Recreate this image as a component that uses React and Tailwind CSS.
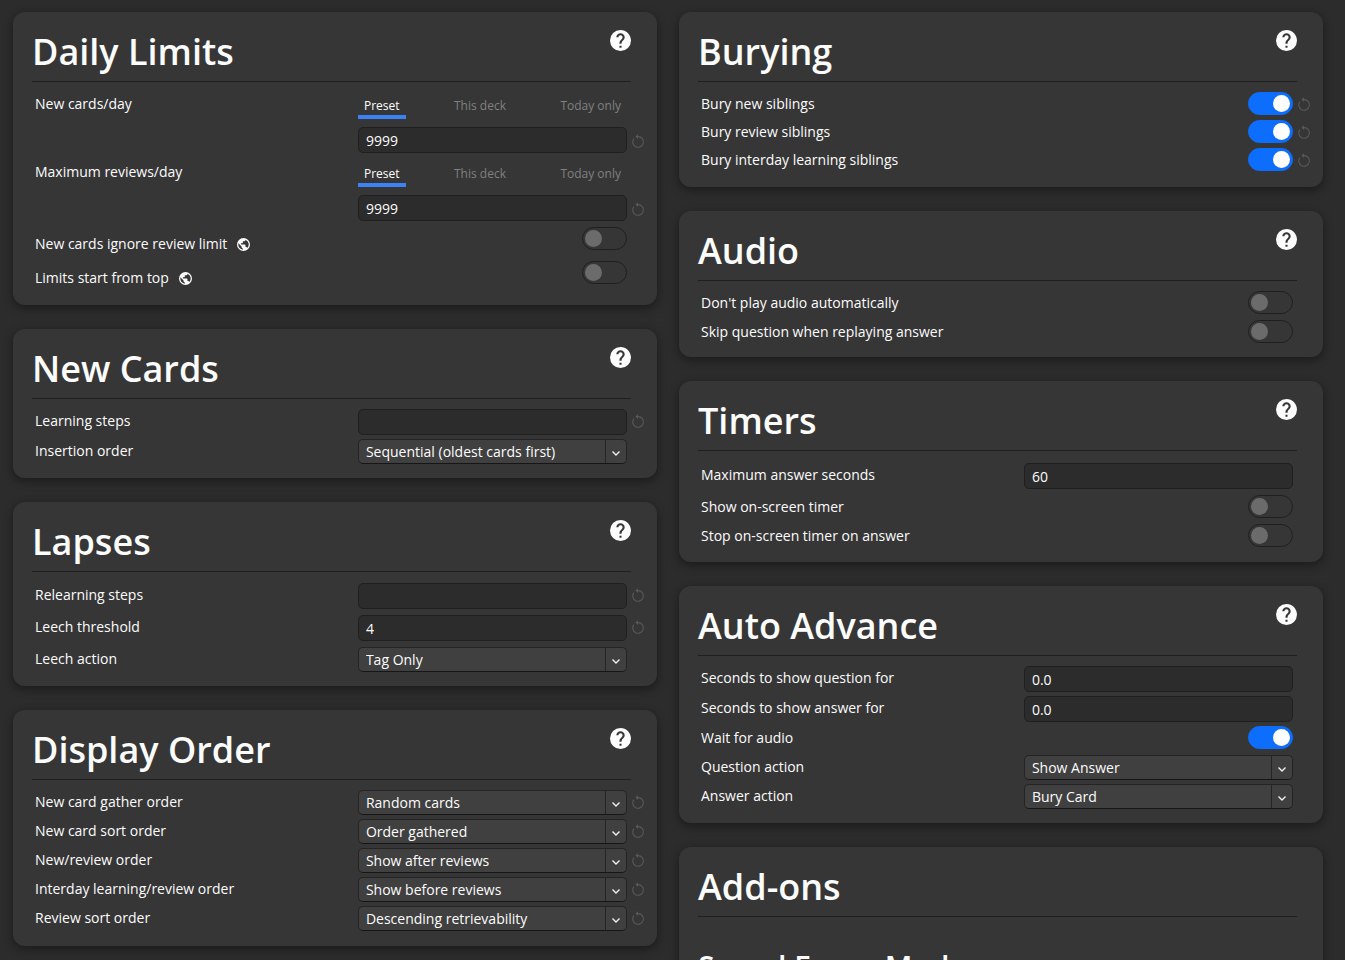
import { useState } from "react"

const tabs = ["Preset", "This deck", "Today only"]

function HelpIcon() {
  return (
    <svg viewBox="2 2 20 20" className="size-[21px]" fill="currentColor" aria-hidden="true">
      <path d="M15.07 11.25l-.9.92C13.45 12.89 13 13.5 13 15h-2v-.5c0-1.11.45-2.11 1.17-2.83l1.24-1.26c.37-.36.59-.86.59-1.41a2 2 0 0 0-2-2 2 2 0 0 0-2 2H8a4 4 0 0 1 4-4 4 4 0 0 1 4 4 3.2 3.2 0 0 1-.93 2.25M13 19h-2v-2h2M12 2A10 10 0 0 0 2 12a10 10 0 0 0 10 10 10 10 0 0 0 10-10c0-5.53-4.5-10-10-10z" />
    </svg>
  )
}

function EarthIcon() {
  return (
    <svg viewBox="2 2 20 20" className="mt-[2px] size-[13px]" fill="currentColor" aria-hidden="true">
      <path d="M17.9 17.39c-.26-.8-1.01-1.39-1.9-1.39h-1v-3a1 1 0 0 0-1-1H8v-2h2a1 1 0 0 0 1-1V7h2a2 2 0 0 0 2-2v-.41a7.984 7.984 0 0 1 2.9 12.8M11 19.93c-3.95-.49-7-3.85-7-7.93 0-.62.08-1.22.21-1.79L9 15v1a2 2 0 0 0 2 2m1-16A10 10 0 0 0 2 12a10 10 0 0 0 10 10 10 10 0 0 0 10-10A10 10 0 0 0 12 2z" />
    </svg>
  )
}

function Revert() {
  return (
    <button type="button" aria-label="Restore default" className="flex justify-end text-[#585858]">
      <svg viewBox="0 0 12 14" className="h-[14px] w-3" fill="none" stroke="currentColor" strokeWidth="1.1" aria-hidden="true">
        <path d="M5 2.6h1.2A5.3 5.3 0 1 1 1.9 4.6" />
        <path d="M6 .2v4.8L3.4 2.6z" fill="currentColor" stroke="none" />
      </svg>
    </button>
  )
}

function Card({ title, help = true, body, children }) {
  return (
    <section className="rounded-xl bg-[#363636] shadow-[0_3px_8px_1px_rgba(0,0,0,0.35)]">
      <div className="pr-[26px] pl-[19px]">
        <div className="flex h-[70px] items-start justify-between border-b border-[#1f1f1f]">
          <h1 className="pt-4 text-4xl leading-12 font-semibold">{title}</h1>
          {help && (
            <button type="button" aria-label={`Help: ${title}`} className="pt-[18px]">
              <HelpIcon />
            </button>
          )}
        </div>
      </div>
      <div className={`flex flex-col pr-[13px] pl-[19px] ${body}`}>{children}</div>
    </section>
  )
}

function Row({ label, id, revert, global, className = "items-start", children }) {
  return (
    <div className={`grid min-h-[25px] grid-cols-[6fr_5fr_17px] pl-[3px] ${className}`}>
      <label htmlFor={id} className="flex items-center gap-[10px] leading-6">
        {label}
        {global && <EarthIcon />}
      </label>
      {children}
      {revert && (
        <div className="flex h-6 items-center justify-end">
          <Revert />
        </div>
      )}
    </div>
  )
}

function TextField({ id, value = "" }) {
  return (
    <input
      id={id}
      type="text"
      defaultValue={value}
      className="h-[26px] w-full rounded-[5px] border border-[#1f1f1f] bg-[#2c2c2c] px-[7px] outline-none"
    />
  )
}

function TextRow({ label, id, value, revert }) {
  return (
    <Row label={label} id={id} revert={revert}>
      <TextField id={id} value={value} />
    </Row>
  )
}

function LimitRow({ label, id, value }) {
  const [active, setActive] = useState("Preset")

  return (
    <Row label={label} id={id} revert className="items-start [&>div:last-child]:self-end [&>label]:leading-5">
      <div>
        <div className="mb-2 flex justify-between text-xs">
          {tabs.map((t) => (
            <button
              key={t}
              type="button"
              onClick={() => setActive(t)}
              className={`h-[25px] border-b-4 px-[6px] pt-[2px] ${t === active ? "border-[#3b82f6] text-white" : "border-transparent text-[#808080]"}`}
            >
              {t}
            </button>
          ))}
        </div>
        <TextField id={id} value={value} />
      </div>
    </Row>
  )
}

function SelectRow({ label, id, value, revert }) {
  return (
    <Row label={label} id={id} revert={revert}>
      <div className="relative">
        <select
          id={id}
          className="block h-[25px] w-full appearance-none rounded-[5px] border border-[#242424] border-b-[#161616] bg-[#404040] px-[7px] outline-none"
        >
          <option>{value}</option>
        </select>
        <span className="pointer-events-none absolute inset-y-px right-px flex w-[21px] items-center justify-center border-l border-[#242424]">
          <svg viewBox="0 0 8 5" className="mt-1 h-[5px] w-2" fill="none" stroke="#f0f0f0" strokeWidth="1.4" aria-hidden="true">
            <path d="M.5.5 4 4 7.5.5" />
          </svg>
        </span>
      </div>
    </Row>
  )
}

function ToggleRow({ label, id, on = false, revert, global, className }) {
  return (
    <Row label={label} id={id} revert={revert} global={global} className={className}>
      <input
        id={id}
        type="checkbox"
        role="switch"
        defaultChecked={on}
        className="h-[23px] w-[45px] appearance-none justify-self-end rounded-full border border-[#1f1f1f] px-[2px] py-[2px] before:block before:size-[17px] before:rounded-full before:bg-[#6b6b6b] checked:border-[#0d6efd] checked:bg-[#0d6efd] checked:before:ml-auto checked:before:bg-white"
      />
    </Row>
  )
}

export default function App() {
  return (
    <main className="h-screen overflow-hidden bg-[#2c2c2c] font-['Open_Sans',sans-serif] text-sm text-[#fcfcfc]">
      <div className="grid grid-cols-2 items-start gap-x-[22px] pt-3 pr-[22px] pl-[13px]">
        <div className="flex flex-col gap-6">
          <Card title="Daily Limits" body="pt-3 pb-[11px]">
            <div className="mb-[5px] flex flex-col gap-[9px]">
              <LimitRow label="New cards/day" id="new-per-day" value="9999" />
              <LimitRow label="Maximum reviews/day" id="reviews-per-day" value="9999" />
            </div>
            <ToggleRow label="New cards ignore review limit" id="ignore-limit" global className="h-[34px] pt-px" />
            <ToggleRow label="Limits start from top" id="from-top" global className="h-[34px] pt-px" />
          </Card>

          <Card title="New Cards" body="gap-1 pt-[10px] pb-[14px]">
            <TextRow label="Learning steps" id="learning-steps" revert />
            <SelectRow label="Insertion order" id="insertion-order" value="Sequential (oldest cards first)" />
          </Card>

          <Card title="Lapses" body="gap-[6px] pt-[11px] pb-[14px]">
            <TextRow label="Relearning steps" id="relearning-steps" revert />
            <TextRow label="Leech threshold" id="leech-threshold" value="4" revert />
            <SelectRow label="Leech action" id="leech-action" value="Tag Only" />
          </Card>

          <Card title="Display Order" body="gap-1 pt-[10px] pb-[15px]">
            <SelectRow label="New card gather order" id="gather-order" value="Random cards" revert />
            <SelectRow label="New card sort order" id="sort-order" value="Order gathered" revert />
            <SelectRow label="New/review order" id="new-review-order" value="Show after reviews" revert />
            <SelectRow label="Interday learning/review order" id="interday-order" value="Show before reviews" revert />
            <SelectRow label="Review sort order" id="review-sort-order" value="Descending retrievability" revert />
          </Card>
        </div>

        <div className="flex flex-col gap-6">
          <Card title="Burying" body="gap-[3px] pt-[10px] pb-[14px]">
            <ToggleRow label="Bury new siblings" id="bury-new" on revert />
            <ToggleRow label="Bury review siblings" id="bury-review" on revert />
            <ToggleRow label="Bury interday learning siblings" id="bury-interday" on revert />
          </Card>

          <Card title="Audio" body="gap-1 pt-[10px] pb-3">
            <ToggleRow label="Don't play audio automatically" id="no-autoplay" />
            <ToggleRow label="Skip question when replaying answer" id="skip-question" />
          </Card>

          <Card title="Timers" body="gap-[6px] pt-3 pb-[13px]">
            <TextRow label="Maximum answer seconds" id="max-seconds" value="60" />
            <div className="flex flex-col gap-1">
              <ToggleRow label="Show on-screen timer" id="show-timer" />
              <ToggleRow label="Stop on-screen timer on answer" id="stop-timer" />
            </div>
          </Card>

          <Card title="Auto Advance" body="gap-1 pt-[10px] pb-[14px]">
            <TextRow label="Seconds to show question for" id="question-seconds" value="0.0" />
            <TextRow label="Seconds to show answer for" id="answer-seconds" value="0.0" />
            <ToggleRow label="Wait for audio" id="wait-audio" on />
            <SelectRow label="Question action" id="question-action" value="Show Answer" />
            <SelectRow label="Answer action" id="answer-action" value="Bury Card" />
          </Card>

          <Card title="Add-ons" help={false} body="pt-8 pb-6">
            <h2 className="text-3xl leading-9 font-semibold">Speed Focus Mode</h2>
          </Card>
        </div>
      </div>
    </main>
  )
}
